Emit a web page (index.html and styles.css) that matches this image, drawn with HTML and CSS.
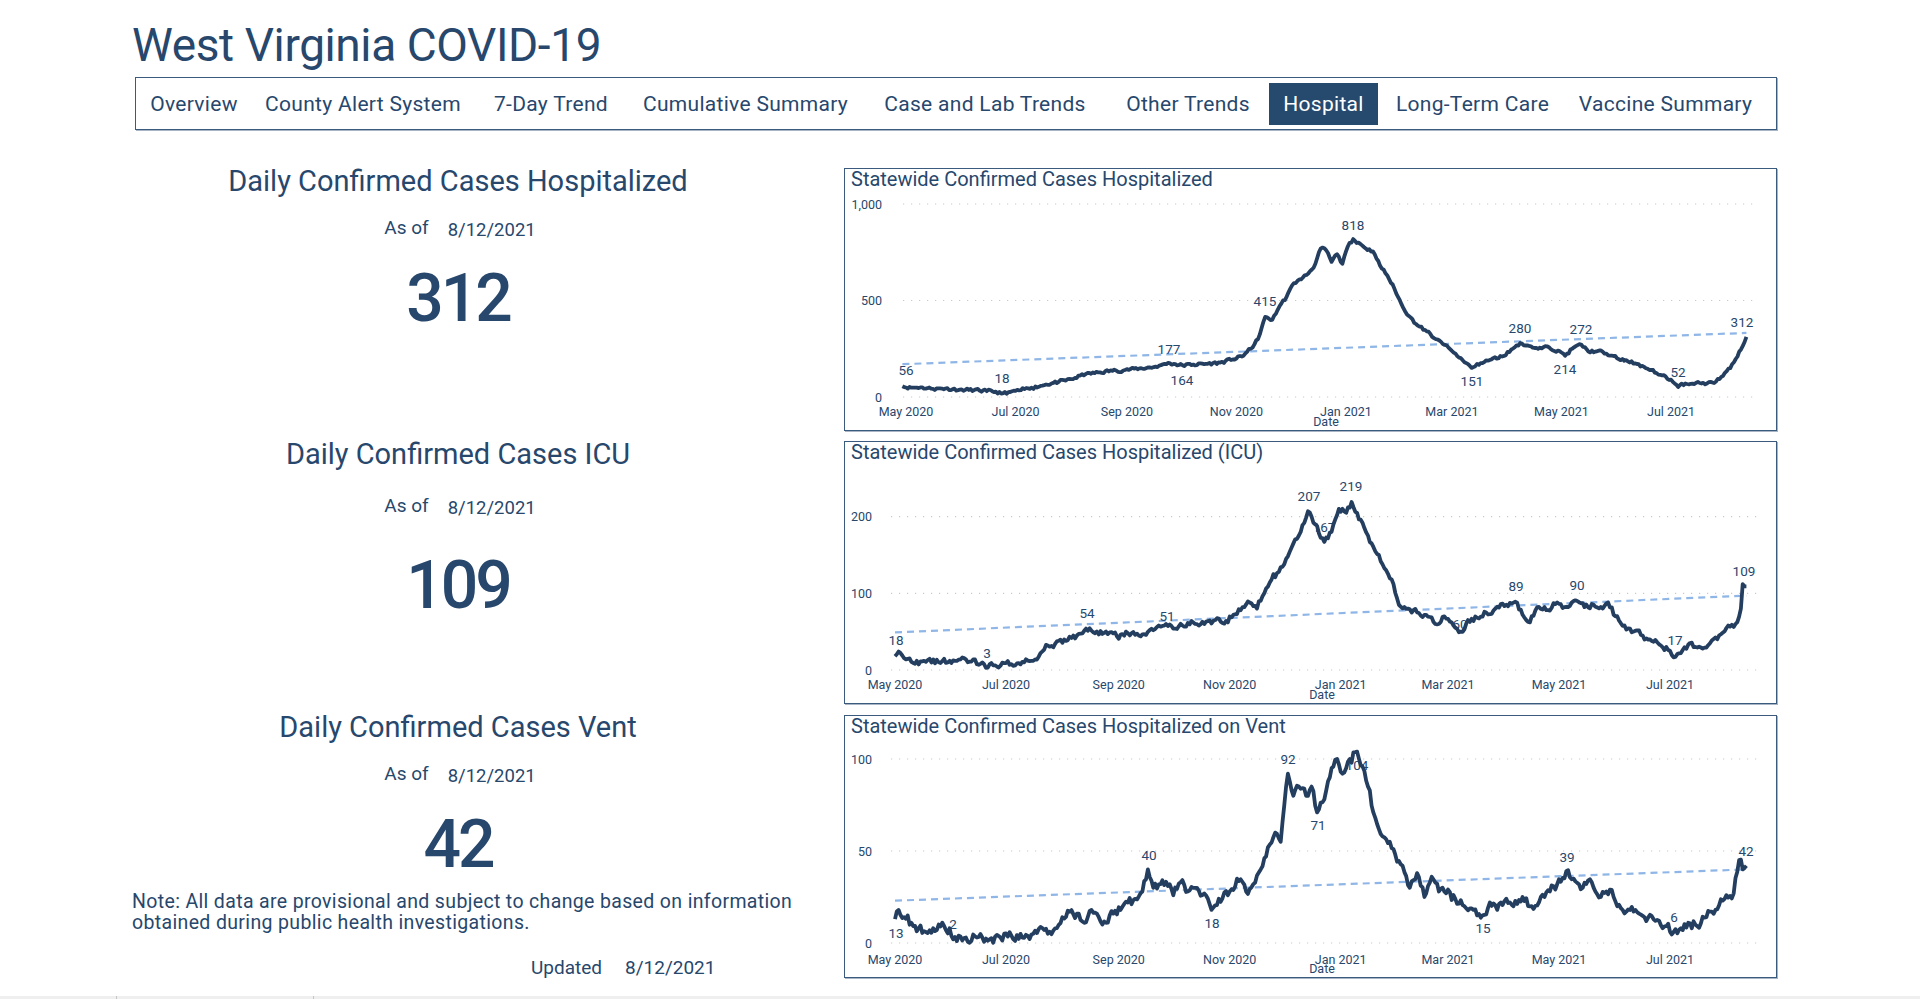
FILE: index.html
```html
<!DOCTYPE html>
<html lang="en">

<head>
    <meta charset="UTF-8">
    <meta name="viewport" content="width=device-width, initial-scale=1.0">
    <title>West Virginia COVID-19 - Hospital</title>
    <link rel="stylesheet" href="styles.css">
</head>

<body>
    <div class="page">
        <h1 class="title">West Virginia COVID-19</h1>

        <nav class="tabs">
            <span class="tab">Overview</span>
            <span class="tab">County Alert System</span>
            <span class="tab">7-Day Trend</span>
            <span class="tab">Cumulative Summary</span>
            <span class="tab">Case and Lab Trends</span>
            <span class="tab">Other Trends</span>
            <span class="tab active">Hospital</span>
            <span class="tab">Long-Term Care</span>
            <span class="tab">Vaccine Summary</span>
        </nav>

        <main class="main">
            <section class="summary">
                <div class="stat stat-hosp">
                    <h2 class="stat-title">Daily Confirmed Cases Hospitalized</h2>
                    <div class="stat-asof"><span class="asof-label">As of</span><span class="asof-date">8/12/2021</span></div>
                    <div class="stat-value">312</div>
                </div>
                <div class="stat stat-icu">
                    <h2 class="stat-title">Daily Confirmed Cases ICU</h2>
                    <div class="stat-asof"><span class="asof-label">As of</span><span class="asof-date">8/12/2021</span></div>
                    <div class="stat-value">109</div>
                </div>
                <div class="stat stat-vent">
                    <h2 class="stat-title">Daily Confirmed Cases Vent</h2>
                    <div class="stat-asof"><span class="asof-label">As of</span><span class="asof-date">8/12/2021</span></div>
                    <div class="stat-value">42</div>
                </div>
                <p class="note">Note: All data are provisional and subject to change based on information<br>obtained during public health investigations.</p>
                <div class="updated"><span>Updated</span><span>8/12/2021</span></div>
            </section>

            <section class="charts">
                <div class="chart-box">
                    <svg id="chart-hosp" class="chart" width="931" height="261" viewBox="845 169 931 261"></svg>
                </div>
                <div class="chart-box">
                    <svg id="chart-icu" class="chart" width="931" height="261" viewBox="845 442 931 261"></svg>
                </div>
                <div class="chart-box chart-vent">
                    <svg id="chart-vent" class="chart" width="931" height="261" viewBox="845 716 931 261"></svg>
                </div>
            </section>
        </main>
    </div>

    <div class="statusbar">
        <span class="seg seg-a"></span>
        <span class="seg seg-b"></span>
    </div>

    <script>
        // page coordinates are used inside each svg (viewBox matches the box position)
        const SVGNS = 'http://www.w3.org/2000/svg';
        const months = [[0, 'May 2020'], [61, 'Jul 2020'], [123, 'Sep 2020'], [184, 'Nov 2020'],
            [245, 'Jan 2021'], [304, 'Mar 2021'], [365, 'May 2021'], [426, 'Jul 2021']];

        const charts = [
            {
                id: 'chart-hosp', title: 'Statewide Confirmed Cases Hospitalized', titleY: 179,
                x0: 906, pxDay: 1.7958, y0: 397, pxVal: 0.193,
                ticks: [[1000, '1,000'], [500, '500'], [0, '0']], tickRight: 882, gridFrom: 903,
                xLabelY: 411, dateY: 421, dateX: 1326, noise: 9, seed: 11,
                trend: [[-2, 170], [468, 332]],
                points: [[-2, 56], [3, 48], [8, 50], [15, 42], [22, 44], [30, 38], [38, 36], [45, 30], [50, 28], [53, 18], [58, 26], [64, 35], [70, 48], [78, 65], [85, 78], [92, 92], [100, 118], [108, 128], [115, 136], [122, 140], [130, 148], [138, 155], [142, 165], [146, 177], [150, 170], [154, 164], [160, 168], [168, 172], [175, 178], [182, 195], [187, 210], [192, 250], [196, 300], [200, 415], [204, 400], [208, 470], [212, 520], [216, 590], [220, 610], [224, 640], [228, 690], [231, 770], [234, 760], [237, 700], [240, 740], [243, 690], [246, 780], [249, 818], [252, 800], [256, 770], [260, 755], [264, 680], [268, 630], [272, 560], [276, 480], [280, 420], [285, 370], [290, 340], [295, 300], [300, 270], [305, 230], [310, 190], [315, 151], [320, 175], [326, 195], [332, 210], [337, 245], [342, 280], [347, 265], [352, 250], [358, 258], [363, 240], [367, 214], [371, 250], [376, 272], [380, 235], [385, 238], [390, 225], [396, 200], [402, 185], [408, 170], [414, 140], [420, 115], [426, 90], [430, 52], [434, 70], [440, 74], [446, 70], [451, 80], [455, 110], [459, 150], [463, 210], [466, 265], [468, 312]],
                labels: [[906, 370, '56'], [1002, 378, '18'], [1169, 349, '177'], [1182, 380, '164'], [1265, 301, '415'], [1353, 225, '818'], [1472, 381, '151'], [1520, 328, '280'], [1565, 369, '214'], [1581, 329, '272'], [1678, 372, '52'], [1742, 322, '312']]
            },
            {
                id: 'chart-icu', title: 'Statewide Confirmed Cases Hospitalized (ICU)', titleY: 452,
                x0: 895, pxDay: 1.8192, y0: 670, pxVal: 0.767,
                ticks: [[200, '200'], [100, '100'], [0, '0']], tickRight: 872, gridFrom: 891,
                xLabelY: 684.5, dateY: 694, dateX: 1322, noise: 4.5, seed: 29,
                trend: [[0, 49], [468, 97]],
                points: [[0, 18], [3, 22], [6, 14], [12, 12], [18, 13], [24, 10], [30, 12], [36, 14], [42, 11], [47, 8], [51, 3], [55, 6], [60, 9], [66, 6], [72, 14], [76, 12], [80, 22], [84, 32], [88, 34], [94, 38], [100, 45], [105, 54], [110, 48], [116, 50], [122, 44], [128, 48], [134, 45], [140, 52], [145, 58], [149, 60], [153, 54], [158, 58], [164, 62], [170, 60], [176, 65], [182, 64], [186, 72], [190, 78], [195, 88], [199, 80], [203, 100], [207, 118], [211, 128], [215, 145], [219, 165], [223, 180], [227, 207], [231, 190], [236, 167], [240, 180], [244, 210], [248, 205], [251, 219], [254, 205], [258, 185], [262, 165], [266, 150], [270, 130], [274, 112], [277, 85], [282, 80], [287, 75], [292, 72], [297, 60], [302, 70], [306, 62], [311, 50], [315, 65], [320, 68], [325, 75], [330, 80], [336, 85], [341, 89], [345, 72], [349, 62], [353, 82], [358, 78], [363, 86], [368, 82], [372, 88], [375, 90], [379, 82], [384, 85], [389, 80], [392, 88], [396, 70], [401, 58], [406, 50], [411, 45], [416, 38], [421, 32], [426, 25], [429, 17], [432, 22], [436, 33], [440, 30], [444, 28], [448, 35], [453, 45], [458, 58], [462, 60], [465, 80], [466, 112], [468, 109]],
                labels: [[896, 640, '18'], [987, 653, '3'], [1087, 613, '54'], [1167, 616, '51'], [1309, 496, '207'], [1324, 527, '167'], [1351, 486, '219'], [1460, 624, '60'], [1516, 586, '89'], [1577, 585, '90'], [1675, 640, '17'], [1744, 571, '109']]
            },
            {
                id: 'chart-vent', title: 'Statewide Confirmed Cases Hospitalized on Vent', titleY: 726,
                x0: 895, pxDay: 1.8192, y0: 943, pxVal: 1.84,
                ticks: [[100, '100'], [50, '50'], [0, '0']], tickRight: 872, gridFrom: 891,
                xLabelY: 959, dateY: 968.5, dateX: 1322, noise: 3.2, seed: 53,
                trend: [[0, 23], [468, 40]],
                points: [[0, 13], [2, 18], [5, 14], [9, 11], [13, 8], [17, 6], [21, 8], [25, 9], [28, 7], [30, 8], [32, 2], [35, 4], [39, 3], [45, 3], [52, 2], [58, 3], [64, 4], [70, 3], [76, 5], [82, 7], [88, 8], [92, 14], [96, 17], [100, 16], [104, 11], [108, 18], [112, 14], [116, 11], [120, 16], [124, 18], [128, 22], [132, 24], [136, 28], [139, 40], [142, 30], [146, 32], [150, 31], [153, 26], [157, 33], [161, 28], [165, 30], [169, 26], [174, 18], [178, 24], [183, 26], [188, 35], [193, 28], [197, 32], [201, 40], [205, 52], [209, 60], [212, 55], [214, 75], [216, 92], [219, 80], [222, 85], [226, 80], [229, 85], [232, 71], [236, 78], [240, 95], [243, 100], [246, 92], [250, 100], [254, 104], [257, 96], [260, 85], [264, 68], [268, 58], [272, 55], [275, 48], [279, 42], [283, 30], [287, 38], [291, 25], [295, 36], [299, 28], [303, 27], [308, 24], [313, 20], [318, 18], [323, 15], [327, 22], [331, 18], [336, 24], [340, 20], [345, 25], [350, 20], [355, 25], [360, 28], [364, 32], [369, 39], [373, 35], [378, 30], [383, 33], [388, 25], [393, 29], [397, 20], [402, 17], [407, 18], [412, 14], [418, 12], [423, 9], [428, 6], [432, 8], [436, 11], [440, 10], [446, 14], [451, 18], [456, 24], [461, 27], [464, 45], [466, 40], [468, 42]],
                labels: [[896, 933, '13'], [953, 924, '2'], [1149, 855, '40'], [1212, 923, '18'], [1288, 759, '92'], [1318, 825, '71'], [1357, 765, '104'], [1483, 928, '15'], [1567, 857, '39'], [1674, 917, '6'], [1746, 851, '42']]
            }
        ];

        function el(name, attrs, text) {
            const node = document.createElementNS(SVGNS, name);
            for (const key in attrs) node.setAttribute(key, attrs[key]);
            if (text !== undefined) node.textContent = text;
            return node;
        }

        function random(seed) {
            return function () {
                seed = (seed * 16807) % 2147483647;
                return (seed - 1) / 2147483646;
            };
        }

        function interpolate(points, day) {
            for (let i = 1; i < points.length; i++) {
                if (day <= points[i][0]) {
                    const a = points[i - 1], b = points[i];
                    const t = (day - a[0]) / (b[0] - a[0]);
                    return a[1] + (b[1] - a[1]) * t;
                }
            }
            return points[points.length - 1][1];
        }

        function drawChart(c) {
            const svg = document.getElementById(c.id);
            const xOf = d => c.x0 + d * c.pxDay;
            const yOf = v => c.y0 - v * c.pxVal;

            svg.appendChild(el('text', { x: 851, y: c.titleY, class: 'chart-title' }, c.title));

            c.ticks.forEach(([v, label]) => {
                svg.appendChild(el('line', { x1: c.gridFrom, x2: 1757, y1: yOf(v), y2: yOf(v), class: 'grid' }));
                svg.appendChild(el('text', { x: c.tickRight, y: yOf(v), class: 'tick tick-y' }, label));
            });

            months.forEach(([d, label]) => {
                svg.appendChild(el('text', { x: xOf(d), y: c.xLabelY, class: 'tick tick-x' }, label));
            });
            svg.appendChild(el('text', { x: c.dateX, y: c.dateY, class: 'tick tick-x' }, 'Date'));

            svg.appendChild(el('line', {
                x1: xOf(c.trend[0][0]), y1: yOf(c.trend[0][1]),
                x2: xOf(c.trend[1][0]), y2: yOf(c.trend[1][1]), class: 'trend'
            }));

            c.labels.forEach(([x, y, label]) => {
                svg.appendChild(el('text', { x: x, y: y, class: 'data-label' }, label));
            });

            const rnd = random(c.seed);
            const keyDays = new Set(c.points.map(p => p[0]));
            let n = 0;
            const coords = [];
            for (let d = c.points[0][0]; d <= 468; d++) {
                n = 0.3 * n + (rnd() - 0.5) * 1.6;
                let v = interpolate(c.points, d);
                if (!keyDays.has(d)) v += n * c.noise;
                coords.push(xOf(d).toFixed(1) + ',' + yOf(Math.max(v, 0)).toFixed(1));
            }
            svg.appendChild(el('polyline', { points: coords.join(' '), class: 'series' }));
        }

        charts.forEach(drawChart);
    </script>
</body>

</html>
```

FILE: styles.css
```css
body {
    margin: 0;
    background-color: #ffffff;
    color: #27476c;
    font-family: Roboto, "Liberation Sans", sans-serif;
}

.page {
    padding: 17px 0 0 132px;
}

.title {
    margin: 0;
    font-size: 46px;
    font-weight: 400;
    line-height: 56px;
    letter-spacing: -0.4px;
}

/* tab bar */
.tabs {
    display: grid;
    grid-template-columns: 116px 222px 154px 235px 244px 162px 109px 189px 197px;
    width: 1640px;
    margin: 4px 0 0 3px;
    padding: 5px 0 4px;
    border: 1px solid #3a5a7e;
    box-shadow: 1px 1px 0 #a9b5c4;
}

.tab {
    height: 42px;
    line-height: 42px;
    text-align: center;
    font-size: 21px;
    letter-spacing: 0.3px;
    white-space: nowrap;
}

.tab.active {
    background-color: #264a6e;
    color: #ffffff;
}

.main {
    display: flex;
    margin-top: 30px;
}

/* left column with the big numbers */
.summary {
    width: 652px;
}

.stat {
    display: flex;
    flex-direction: column;
    align-items: center;
}

.stat-hosp,
.stat-icu {
    height: 273px;
}

.stat-title {
    margin: 3px 0 0;
    font-size: 29px;
    font-weight: 400;
    line-height: 36px;
    white-space: nowrap;
}

.stat-asof {
    display: flex;
    align-items: flex-start;
    gap: 19px;
    margin: 17px 0 0 4px;
    font-size: 19px;
    line-height: 24px;
}

.asof-date {
    padding-top: 2px;
    font-size: 18.5px;
}

.stat-value {
    margin-top: 17px;
    font-size: 66px;
    font-weight: 500;
    line-height: 80px;
    letter-spacing: -3px;
}

.stat-icu .stat-asof {
    margin-top: 22px;
}

.stat-icu .stat-value {
    margin-top: 26px;
}

.note {
    width: 700px;
    margin: 6px 0 0;
    font-size: 19.5px;
    line-height: 21px;
    letter-spacing: 0.35px;
}

.updated {
    display: flex;
    gap: 23px;
    margin: 23px 0 0 399px;
    font-size: 19px;
    line-height: 24px;
}

/* charts */
.charts {
    display: flex;
    flex-direction: column;
    gap: 10px;
    width: 933px;
    margin-left: 60px;
    padding-top: 8px;
}

.chart-box {
    height: 261px;
    border: 1px solid #3a5a7e;
    box-shadow: 1px 1px 0 #a9b5c4;
}

.chart-vent {
    margin-top: 1px;
}

.chart {
    display: block;
    overflow: visible;
}

.chart text {
    font-family: Roboto, "Liberation Sans", sans-serif;
    fill: #27476c;
    dominant-baseline: central;
}

.chart .chart-title {
    font-size: 20px;
}

.chart .tick {
    font-size: 12.5px;
}

.chart .tick-y {
    text-anchor: end;
}

.chart .tick-x {
    text-anchor: middle;
}

.chart .data-label {
    font-size: 13.5px;
    text-anchor: middle;
}

.grid {
    stroke: #c9c9c9;
    stroke-width: 1.2;
    stroke-dasharray: 1.2 6.8;
}

.trend {
    stroke: #8fb6e6;
    stroke-width: 2.2;
    stroke-dasharray: 7 5;
}

.series {
    fill: none;
    stroke: #243e60;
    stroke-width: 3.8;
    stroke-linejoin: round;
}

/* bottom strip of the viewer */
.statusbar {
    position: fixed;
    left: 0;
    right: 0;
    bottom: 0;
    display: flex;
    height: 3px;
    background-color: #efefef;
}

.seg {
    border-right: 1px solid #c6c6c6;
}

.seg-a {
    width: 116px;
}

.seg-b {
    width: 196px;
}
```
